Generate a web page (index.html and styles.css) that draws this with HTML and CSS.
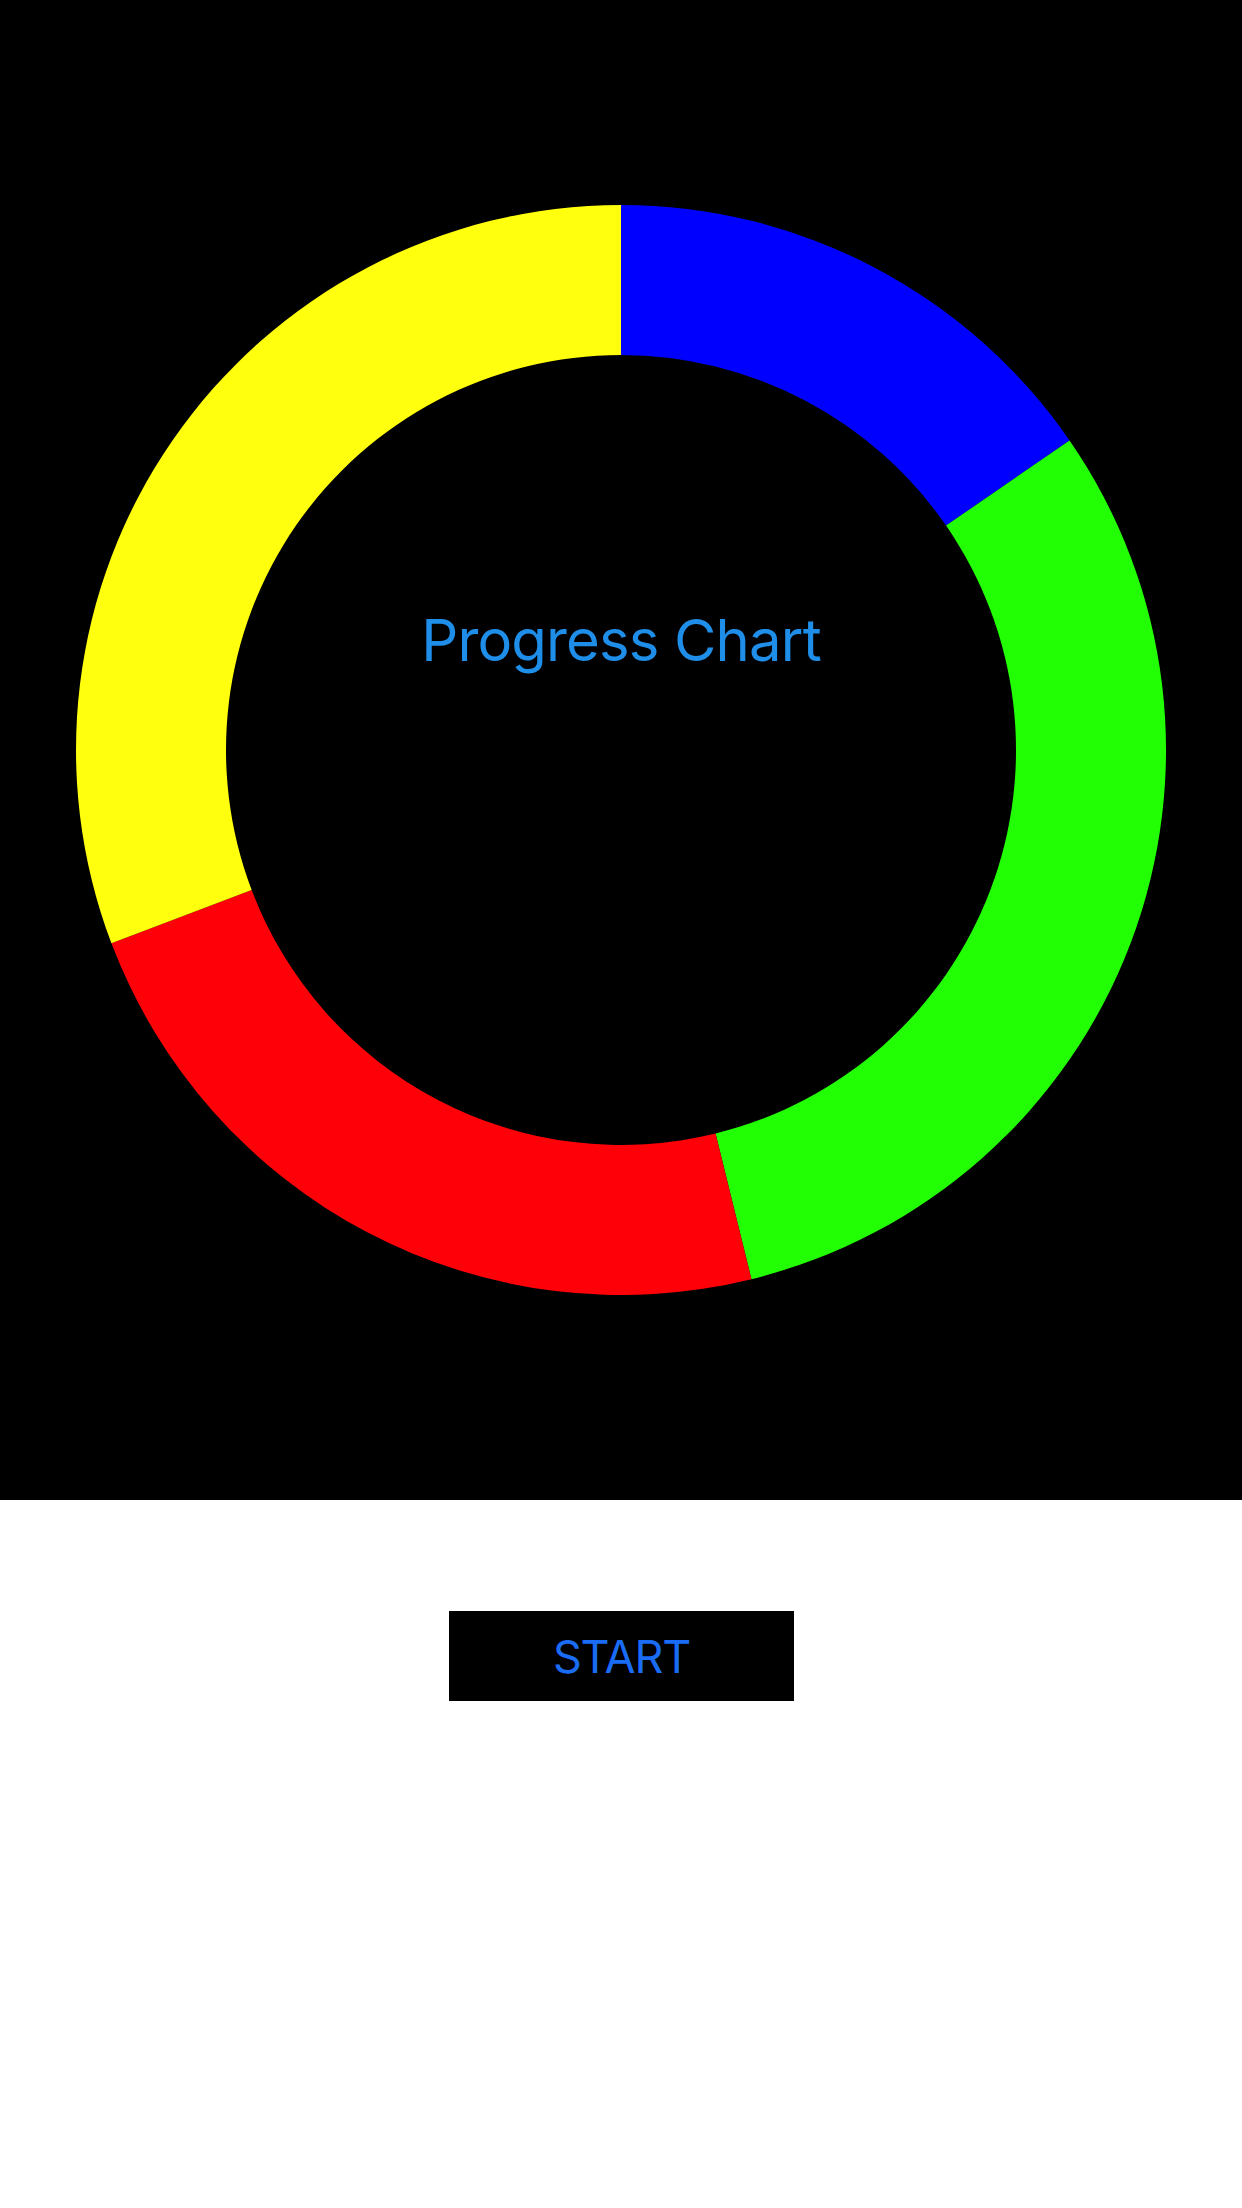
FILE: index.html
```html
<!DOCTYPE html>
<html>
<head>
<meta charset="utf-8">
<link rel="stylesheet" href="styles.css">
</head>
<body>
  <section class="chart-panel">
    <svg class="donut" width="1090" height="1090" viewBox="0 0 1090 1090">
      <g transform="translate(545 545)">
        <path class="seg seg-blue" d="M 0 -545 A 545 545 0 0 1 448.53 -309.59 L 325.08 -224.39 A 395 395 0 0 0 0 -395 Z"/>
        <path class="seg seg-green" d="M 448.53 -309.59 A 545 545 0 0 1 130.45 529.16 L 94.55 383.52 A 395 395 0 0 0 325.08 -224.39 Z"/>
        <path class="seg seg-red" d="M 130.45 529.16 A 545 545 0 0 1 -509.58 193.26 L -369.33 140.07 A 395 395 0 0 0 94.55 383.52 Z"/>
        <path class="seg seg-yellow" d="M -509.58 193.26 A 545 545 0 0 1 0 -545 L 0 -395 A 395 395 0 0 0 -369.33 140.07 Z"/>
      </g>
      <text class="chart-title" x="545" y="455.5" text-anchor="middle">Progress Chart</text>
    </svg>
  </section>
  <section class="controls">
    <button class="start-btn" type="button">START</button>
  </section>
</body>
</html>
```
FILE: styles.css
```css
html, body {
  margin: 0;
  padding: 0;
  background: #ffffff;
}
body {
  width: 1242px;
  height: 2208px;
  font-family: Inter, "Liberation Sans", sans-serif;
}
.chart-panel {
  height: 1500px;
  background: #000000;
  display: flex;
  align-items: center;
  justify-content: center;
}
.donut {
  display: block;
}
.seg-blue { fill: #0000ff; }
.seg-green { fill: #22ff05; }
.seg-red { fill: #fd0008; }
.seg-yellow { fill: #ffff0e; }
.chart-title {
  fill: #1e8ee9;
  font-family: Inter, "Liberation Sans", sans-serif;
  font-size: 58px;
  font-weight: 400;
  letter-spacing: -0.85px;
}
.controls {
  display: flex;
  justify-content: center;
  padding-top: 111px;
}
.start-btn {
  width: 345px;
  height: 90px;
  margin-left: 1px;
  background: #000000;
  border: none;
  padding: 0;
  color: #1a6cf4;
  font-family: Inter, "Liberation Sans", sans-serif;
  font-size: 45px;
  font-weight: 400;
  letter-spacing: -1.2px;
  cursor: pointer;
}
```
